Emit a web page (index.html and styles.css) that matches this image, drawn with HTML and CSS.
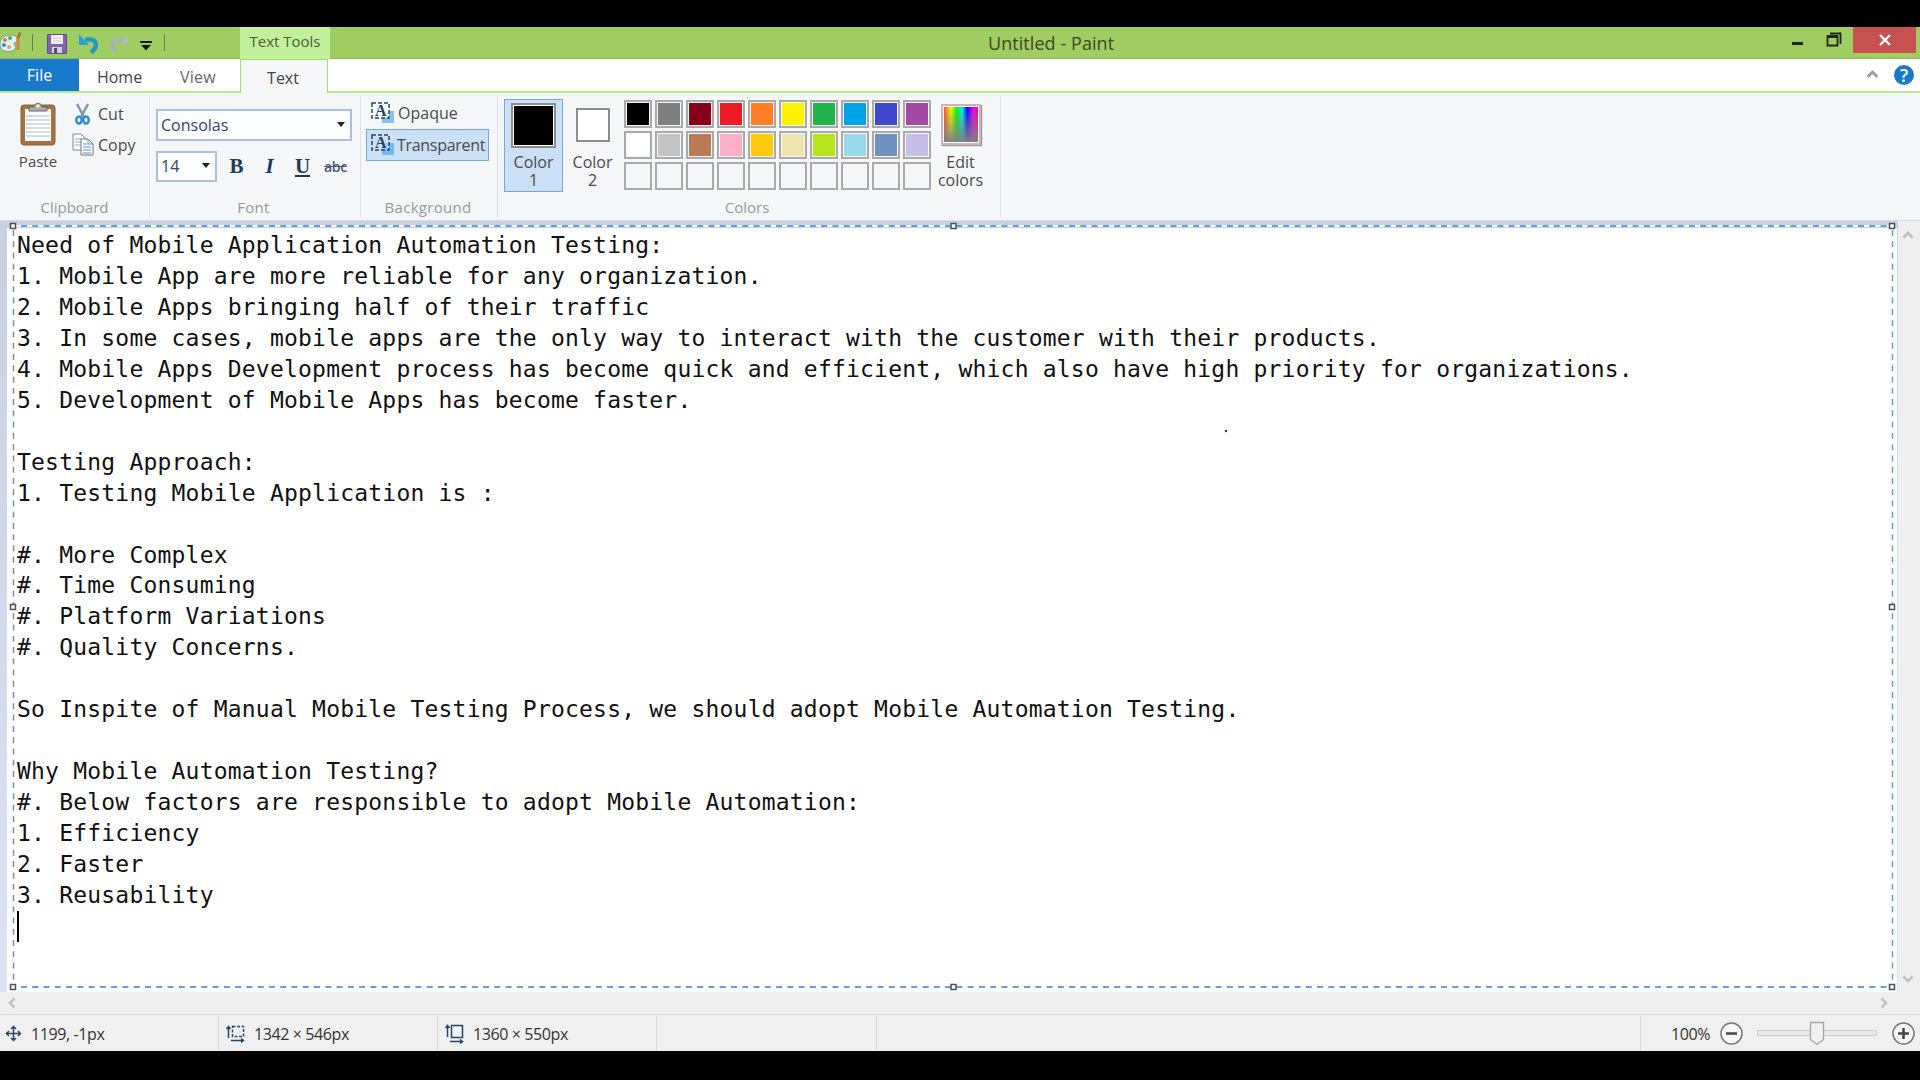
FILE: index.html
```html
<!DOCTYPE html>
<html lang="en">
<head>
<meta charset="utf-8">
<title>Untitled - Paint</title>
<link rel="stylesheet" href="styles.css">
</head>
<body>
<div class="window">
  <header class="titlebar">
    <div class="quick">
      <svg class="palette" width="23" height="22" viewBox="0 0 23 22"><path d="M1 13C1 7 6 4 12 4c5 0 7 3 6 6-1 2-3 1-3 3s3 2 1 5c-3 3-7 3-10 2-3 0-5-3-5-7z" fill="#e3eef2" stroke="#6997a5"/><circle cx="6" cy="9" r="2" fill="#d7794b"/><circle cx="11" cy="7" r="2" fill="#58aa61"/><circle cx="5" cy="14" r="2" fill="#4187bd"/><circle cx="10" cy="16" r="2" fill="#d6ad38"/><path d="M19 5v14" stroke="#c48b36" stroke-width="3"/><path d="M18 6l2-5 2 1-1 5z" fill="#a76d3d"/></svg>
      <i class="bar bar-a"></i>
      <svg class="save" width="20" height="20" viewBox="0 0 20 20"><path d="M.5.5h19v19H.5z" fill="#8265a9" stroke="#65498d"/><path d="M4 1h12v9H4z" fill="#f3f1fa"/><path d="M6 4h8M6 7h8" stroke="#c9c2db"/><path d="M5 13h10v6H5z" fill="#d4cee0"/><path d="M7 14h3v5H7z" fill="#59486d"/></svg>
      <svg class="undo" width="20" height="20" viewBox="0 0 20 20"><path d="M6 5.500h5c7 0 8 8 1 13" fill="none" stroke="#249ac3" stroke-width="4.500"/><path d="M0 0v11h10z" fill="#2ba3cc"/></svg>
      <svg class="redo" width="20" height="20" viewBox="0 0 20 20"><path d="M14 5.500H9c-7 0-8 8-1 13" fill="none" stroke="#a3b8a8" stroke-width="4.500"/><path d="M19 0v11H10z" fill="#a9bcae"/></svg>
      <svg class="more" width="12" height="10" viewBox="0 0 12 10"><path d="M0 0h12v2H0zM1 4h10L6 9.5z" fill="#182008"/></svg>
      <i class="bar bar-b"></i>
    </div>
    <div class="context">Text Tools</div>
    <h1 class="title"><span>Untitled - Paint</span></h1>
    <div class="controls">
      <svg width="62" height="26" viewBox="0 0 62 26"><path d="M1 15h11v3H1z" fill="#20260f"/><path d="M36.500 9.500h10v9h-10zM39 6.500h10.500V17" fill="none" stroke="#20260f" stroke-width="1.800"/><path d="M36 9.500h11" stroke="#20260f" stroke-width="3"/></svg>
      <div class="close"><svg width="12" height="12" viewBox="0 0 12 12"><path d="M1 1l10 10M11 1L1 11" stroke="#fff" stroke-width="2.300"/></svg></div>
    </div>
  </header>
  <nav class="tabs">
    <div class="tab file">File</div><div class="tab home">Home</div><div class="tab view">View</div><div class="tab text">Text</div>
    <div class="tabhelp">
      <svg width="13" height="10" viewBox="0 0 13 10"><path d="M1.500 8l5-5 5 5" fill="none" stroke="#a0a0a0" stroke-width="3"/></svg>
      <div class="help">?</div>
    </div>
  </nav>
  <section class="ribbon">
    <div class="group clipboard">
      <div class="tools">
        <div class="paste">
          <svg width="36" height="44" viewBox="0 0 36 44"><rect x="1" y="3" width="34" height="40" rx="3" fill="#a6713f" stroke="#8b6037"/><path d="M5 7h26v32H5z" fill="#fafcfc"/><path d="M6 14h24M6 18h24M6 22h24M6 26h24M6 30h24M6 34h24" stroke="#a8bbc5"/><path d="M9 9V5h5c0-5 8-5 8 0h5v4z" fill="#acaeac" stroke="#656967"/><circle cx="18" cy="4" r="1.500" fill="#fff"/></svg>
          <span>Paste</span>
        </div>
        <div class="cutcopy">
          <div class="cmd cut"><svg width="22" height="22" viewBox="0 0 22 22"><path d="M5 1l7 13M16 1L9 14" stroke="#7f98aa" stroke-width="2.500"/><ellipse cx="7" cy="17" rx="2.700" ry="3.500" fill="none" stroke="#2e8fc7" stroke-width="2.500"/><ellipse cx="14" cy="17" rx="2.700" ry="3.500" fill="none" stroke="#2e8fc7" stroke-width="2.500"/></svg><span>Cut</span></div>
          <div class="cmd copy"><svg width="22" height="23" viewBox="0 0 22 23"><path d="M1 1h8l4 4v12H1z" fill="#fff" stroke="#7e8992"/><path d="M3 6h6M3 9h7M3 12h7" stroke="#8cabc4"/><path d="M9 6h7l5 5v11H9z" fill="#fff" stroke="#6c7780"/><path d="M16 6v5h5M11 11h4M11 14h8M11 17h8M11 20h8" fill="none" stroke="#5c94bf"/></svg><span>Copy</span></div>
        </div>
      </div>
      <div class="caption">Clipboard</div>
    </div>
    <div class="group font">
      <div class="family combo"><span>Consolas</span><i class="down"></i></div>
      <div class="fontrow">
        <div class="size combo"><span>14</span><i class="down"></i></div>
        <b class="glyph bold">B</b><i class="glyph italic">I</i><b class="glyph under">U</b><span class="strike">abc</span>
      </div>
      <div class="caption">Font</div>
    </div>
    <div class="group background">
      <div class="mode"><svg width="23" height="21" viewBox="0 0 23 21"><path d="M11 9h12v12H11z" fill="#83c2f5"/><path d="M1 1h17v15H1z" fill="#fafcff" stroke="#234568" stroke-width="1.500" stroke-dasharray="4 2"/><text class="letter" x="4" y="14">A</text></svg><span>Opaque</span></div>
      <div class="mode selected"><svg width="23" height="21" viewBox="0 0 23 21"><path d="M11 9h12v12H11z" fill="#75b9f2"/><path d="M1 1h17v15H1z" fill="#c9e0f7" fill-opacity=".6" stroke="#234568" stroke-width="1.500" stroke-dasharray="4 2"/><text class="letter" x="4" y="14">A</text></svg><span>Transparent</span></div>
      <div class="caption">Background</div>
    </div>
    <div class="group colors">
      <div class="tools">
        <div class="slot active"><i class="chip large"></i><span>Color<br>1</span></div>
        <div class="slot"><i class="chip small"></i><span>Color<br>2</span></div>
        <div class="swatches">
          <i class="black"></i><i class="gray"></i><i class="maroon"></i><i class="red"></i><i class="orange"></i><i class="yellow"></i><i class="green"></i><i class="blue"></i><i class="indigo"></i><i class="purple"></i>
          <i class="white"></i><i class="silver"></i><i class="brown"></i><i class="pink"></i><i class="gold"></i><i class="cream"></i><i class="lime"></i><i class="sky"></i><i class="slate"></i><i class="lavender"></i>
          <i></i><i></i><i></i><i></i><i></i><i></i><i></i><i></i><i></i><i></i>
        </div>
        <div class="edit"><i class="spectrum"></i><span>Edit<br>colors</span></div>
      </div>
      <div class="caption">Colors</div>
    </div>
  </section>
  <main class="workspace">
    <div class="canvas">
<pre class="note">Need of Mobile Application Automation Testing:
1. Mobile App are more reliable for any organization.
2. Mobile Apps bringing half of their traffic
3. In some cases, mobile apps are the only way to interact with the customer with their products.
4. Mobile Apps Development process has become quick and efficient, which also have high priority for organizations.
5. Development of Mobile Apps has become faster.

Testing Approach:
1. Testing Mobile Application is :

#. More Complex
#. Time Consuming
#. Platform Variations
#. Quality Concerns.

So Inspite of Manual Mobile Testing Process, we should adopt Mobile Automation Testing.

Why Mobile Automation Testing?
#. Below factors are responsible to adopt Mobile Automation:
1. Efficiency
2. Faster
3. Reusability</pre>
      <i class="caret"></i>
    </div>
    <svg class="selection" width="1898" height="771" viewBox="0 0 1898 771">
      <path d="M13 5H1892" stroke="#f4f8ff" stroke-width="2"/>
      <path d="M13 5H1892M13 766H1892" stroke="#659fd6" stroke-width="2" stroke-dasharray="6 5.270" stroke-dashoffset="-8"/>
      <path d="M13.500 5V766" stroke="#7191b1" stroke-width="1.500" stroke-dasharray="6 5.270" stroke-dashoffset="-4"/>
      <path d="M1892.500 5V766" stroke="#659fd6" stroke-width="1.500" stroke-dasharray="6 5.270" stroke-dashoffset="-4"/>
      <path d="M10.500 2.500h5v5h-5zM951 2.500h5v5h-5zM1889.500 2.500h5v5h-5zM10.500 383.500h5v5h-5zM1889.500 383.500h5v5h-5zM10.500 763.500h5v5h-5zM951 763.500h5v5h-5zM1889.500 763.500h5v5h-5z" fill="#fff" stroke="#49515f" stroke-width="1.500"/>
      <circle cx="1226" cy="210" r="1.200" fill="#333"/>
    </svg>
    <div class="vscroll"><svg width="12" height="9" viewBox="0 0 12 9"><path d="M1.500 7.500L6 3l4.500 4.500" fill="none" stroke="#b7c0c7" stroke-width="2.700"/></svg><svg width="12" height="9" viewBox="0 0 12 9"><path d="M1.500 1.500L6 6l4.500-4.500" fill="none" stroke="#bfc2c4" stroke-width="2.700"/></svg></div>
  </main>
  <div class="hscroll"><svg width="9" height="12" viewBox="0 0 9 12"><path d="M7.500 1.500L3 6l4.500 4.500" fill="none" stroke="#bfc2c4" stroke-width="2.700"/></svg><svg width="9" height="12" viewBox="0 0 9 12"><path d="M1.500 1.500L6 6l-4.500 4.500" fill="none" stroke="#bfc2c4" stroke-width="2.700"/></svg></div>
  <footer class="status">
    <div class="cell position"><svg width="17" height="17" viewBox="0 0 17 17"><path d="M1 8.500h15M8.500 1v15M4 6L1.500 8.500 4 11M13 6l2.500 2.500L13 11M6 4l2.500-2.500L11 4M6 13l2.500 2.500L11 13" fill="none" stroke="#2c4668" stroke-width="1.500"/></svg><span>1199, -1px</span></div>
    <div class="cell extent"><svg width="20" height="18" viewBox="0 0 20 18"><path d="M2.500 13V2M.5 4l2-2.500 2 2.500M5 15.500h12M15 13.500l2.500 2-2.500 2" fill="none" stroke="#29456b" stroke-width="1.500"/><path d="M6.500 1.500h11v10h-11z" fill="none" stroke="#29456b" stroke-width="1.500" stroke-dasharray="3 1.500"/></svg><span>1342 × 546px</span></div>
    <div class="cell extent"><svg width="20" height="20" viewBox="0 0 20 20"><path d="M2.500 13V2M.5 4l2-2.500 2 2.500M5 17.500h12M15 15.500l2.500 2-2.500 2" fill="none" stroke="#29456b" stroke-width="1.500"/><path d="M6.500 1.500h11v12h-11z" fill="#eaf5ff" stroke="#29456b" stroke-width="1.500"/></svg><span>1360 × 550px</span></div>
    <div class="cell"></div>
    <div class="cell"></div>
    <div class="zoom"><span>100%</span>
      <svg width="23" height="23" viewBox="0 0 23 23"><circle cx="11.500" cy="11.500" r="10.500" fill="#f8f8f8" stroke="#777" stroke-width="1.500"/><path d="M6 11.500h11" stroke="#444" stroke-width="2.500"/></svg>
      <svg class="slider" width="120" height="25" viewBox="0 0 120 25"><path d="M.5 9.500h119v5H.5z" fill="#e9e9e9" stroke="#ccc"/><path d="M53.500 1.500h13v17L60 23.500l-6.500-5z" fill="#f0f0f0" stroke="#a4a4a4" stroke-width="1.300"/></svg>
      <svg width="23" height="23" viewBox="0 0 23 23"><circle cx="11.500" cy="11.500" r="10.500" fill="#f8f8f8" stroke="#777" stroke-width="1.500"/><path d="M6 11.500h11M11.500 6v11" stroke="#444" stroke-width="2.500"/></svg>
    </div>
  </footer>
</div>
</body>
</html>
```
FILE: styles.css
```css
* { box-sizing: border-box; }
body { margin: 0; padding: 27px 0 29px; width: 1920px; height: 1080px; background: #000; font-family: "Open Sans", "Noto Sans", sans-serif; font-size: 16px; color: #4a4a4a; overflow: hidden; }
svg { display: block; flex: none; }
.window { height: 1024px; display: grid; grid-template-rows: 32px 34px 128px 771px 22px 37px; }

.titlebar { background: #a0cd62; display: grid; grid-template-columns: 240px 90px 1460px 130px; border-bottom: 1px solid #8db65a; }
.quick { display: flex; align-items: flex-start; }
.palette { margin-top: 4px; margin-left: -1px; }
.bar { width: 1px; height: 17px; margin-top: 7px; background: #668542; }
.bar-a { margin-left: 10px; }
.save { margin: 7px 0 0 14px; }
.undo { margin: 7px 0 0 12px; }
.redo { margin: 7px 0 0 10px; }
.more { margin: 14px 0 0 11px; }
.bar-b { margin-left: 12px; }
.context { background: #c1f19a; color: #485f3b; text-align: center; font-size: 15px; line-height: 28px; }
.title { margin: 0; font-size: 18px; font-weight: 400; line-height: 32px; color: #3c481f; padding-left: 658px; white-space: nowrap; letter-spacing: .06px; }
.controls { display: flex; height: 26px; padding-left: 1px; }
.close { width: 63px; background: #c75050; display: flex; align-items: center; justify-content: center; }

.tabs { background: #fff; display: flex; border-bottom: 2px solid #b5ec91; }
.tab { display: flex; align-items: center; justify-content: center; height: 32px; font-size: 16px; color: #444; }
.file { width: 79px; background: #1979ca; color: #fff; }
.home { width: 81px; padding-top: 3px; }
.view { width: 80px; color: #666; padding-top: 3px; padding-right: 4px; letter-spacing: .3px; }
.text { width: 88px; height: 34px; background: #f4f6f7; border: 1px solid #a1df75; border-bottom: 0; padding-top: 2px; padding-right: 2px; }
.tabhelp { margin-left: auto; padding: 6px 6px 0 0; display: flex; gap: 15px; }
.tabhelp svg { margin-top: 4px; }
.help { width: 20px; height: 20px; border-radius: 50%; background: #1979ca; color: #fff; font-size: 18px; font-weight: 600; line-height: 20px; text-align: center; }

.ribbon { background: #f4f6f7; display: grid; grid-template-columns: 150px 211px 137px 503px; padding-top: 3px; border-bottom: 1px solid #d9dde3; }
.group { height: 121px; border-right: 1px solid #dfe2e5; display: flex; flex-direction: column; }
.caption { margin-top: auto; height: 20px; line-height: 21px; text-align: center; font-size: 15px; color: #969a9f; }
.font .caption { padding-right: 3px; letter-spacing: .3px; }
.background .caption { padding-right: 2px; letter-spacing: .3px; }
.tools { display: flex; }
.paste { width: 72px; padding: 6px 0 0 4px; display: flex; flex-direction: column; align-items: center; line-height: 30px; }
.paste span { font-size: 15px; }
.cmd { display: flex; align-items: center; height: 31px; gap: 4px; font-size: 16px; }
.cut { margin-top: 2px; }

.combo { border: 2px solid #aebfdd; background: #fcfdff; display: flex; align-items: center; color: #394366; padding: 0 5px 1px 3px; justify-content: space-between; }
.family { width: 196px; height: 32px; margin: 13px 0 0 6px; }
.size { width: 61px; height: 31px; }
.down { border: 4px solid transparent; border-top: 5px solid #222; border-bottom: 0; }
.fontrow { display: flex; margin: 9px 0 0 6px; align-items: center; }
.glyph { width: 33px; text-align: center; font: bold 21px/30px "Liberation Serif", serif; color: #23395a; }
.bold { margin-left: 3px; }
.italic { font-style: italic; }
.under { text-decoration: underline; }
.strike { margin-left: 5px; font-size: 14px; line-height: 30px; padding-top: 2px; font-weight: 600; color: #4a5b75; text-decoration: line-through; letter-spacing: -.3px; }

.mode { width: 123px; height: 32px; margin-left: 5px; padding-left: 4px; display: flex; align-items: center; gap: 4px; border: 1px solid transparent; white-space: nowrap; font-size: 16px; }
.mode:first-child { margin-top: 1px; }
.selected { background: #c9e0f7; border-color: #76a7d6; }
.selected span { letter-spacing: -.3px; margin-left: -1px; }
.mode svg { margin-bottom: 1px; }
.letter { font: bold 16px "Liberation Serif", serif; fill: #24405f; }

.colors .tools { padding-left: 6px; }
.slot { width: 59px; height: 93px; margin-top: 3px; padding-top: 3px; display: flex; flex-direction: column; align-items: center; line-height: 18px; text-align: center; font-size: 16px; border: 1px solid transparent; }
.active { background: #c9e0f7; border-color: #76a7d6; }
.chip { border: 2px solid #8c8c8c; }
.large { width: 45px; height: 45px; background: #000; box-shadow: inset 0 0 0 1px #fff; margin-bottom: 5px; }
.small { width: 34px; height: 34px; margin: 5px 0 11px; background: #fff; }
.swatches { display: grid; grid-template-columns: repeat(10, 28px); grid-auto-rows: 28px; gap: 3px; margin: 4px 0 0 2px; }
.swatches i { border: 2px solid #aaa; box-shadow: inset 0 0 0 1px #f7f7f7; }
.black { background: #000; } .gray { background: #7f7f7f; } .maroon { background: #880015; } .red { background: #ed1c24; } .orange { background: #ff7f27; }
.yellow { background: #fff200; } .green { background: #22b14c; } .blue { background: #00a2e8; } .indigo { background: #3f48cc; } .purple { background: #a349a4; }
.white { background: #fff; } .silver { background: #c3c3c3; } .brown { background: #b97a57; } .pink { background: #ffaec9; } .gold { background: #ffc90e; }
.cream { background: #efe4b0; } .lime { background: #b5e61d; } .sky { background: #99d9ea; } .slate { background: #7092be; } .lavender { background: #c8bfe7; }
.edit { width: 59px; padding-top: 8px; display: flex; flex-direction: column; align-items: center; line-height: 18px; text-align: center; }
.spectrum { width: 40px; height: 41px; margin-bottom: 8px; border: 2px solid #d0b1ba; box-shadow: inset 0 0 0 1px #fff, 1px 1px 1px #999; background: linear-gradient(transparent, #808080), linear-gradient(90deg, #f33, #ff0 22%, #0f0 38%, #0ef 54%, #00f 67%, #f0e 85%, #f05); }
.colors .caption { width: 498px; }

.workspace { position: relative; display: grid; grid-template-columns: 1898px 22px; background: linear-gradient(#c8d0e1, #dbe3f3); }
.canvas { margin: 7px 1px 0 7px; background: #fff; padding: 2px 0 0 10px; }
.note { margin: 0; font: 23px/30.960px "DejaVu Sans Mono", monospace; letter-spacing: .204px; color: #111; }
.caret { display: block; width: 2px; height: 31px; background: #000; }
.selection { position: absolute; left: 0; top: 0; }
.vscroll { background: #efefef; display: flex; flex-direction: column; justify-content: space-between; padding: 9px 0 8px 4px; }
.hscroll { background: #efefef; display: flex; justify-content: space-between; align-items: center; padding: 0 31px 0 7px; }

.status { background: #f0f0f0; border-top: 1px solid #d9d9d9; display: grid; grid-template-columns: 219px 219px 219px 220px 764px 279px; font-size: 16px; color: #333; padding-top: 1px; }
.cell { border-right: 1px solid #d9d9d9; display: flex; align-items: center; white-space: nowrap; }
.position { padding-left: 5px; gap: 9px; letter-spacing: -.4px; }
.extent { padding-left: 7px; gap: 8px; letter-spacing: -.4px; }
.zoom { display: flex; align-items: center; padding-left: 30px; letter-spacing: -.4px; }
.zoom span { flex: none; width: 49px; }
.slider { margin: 0 15px 0 14px; }
```
